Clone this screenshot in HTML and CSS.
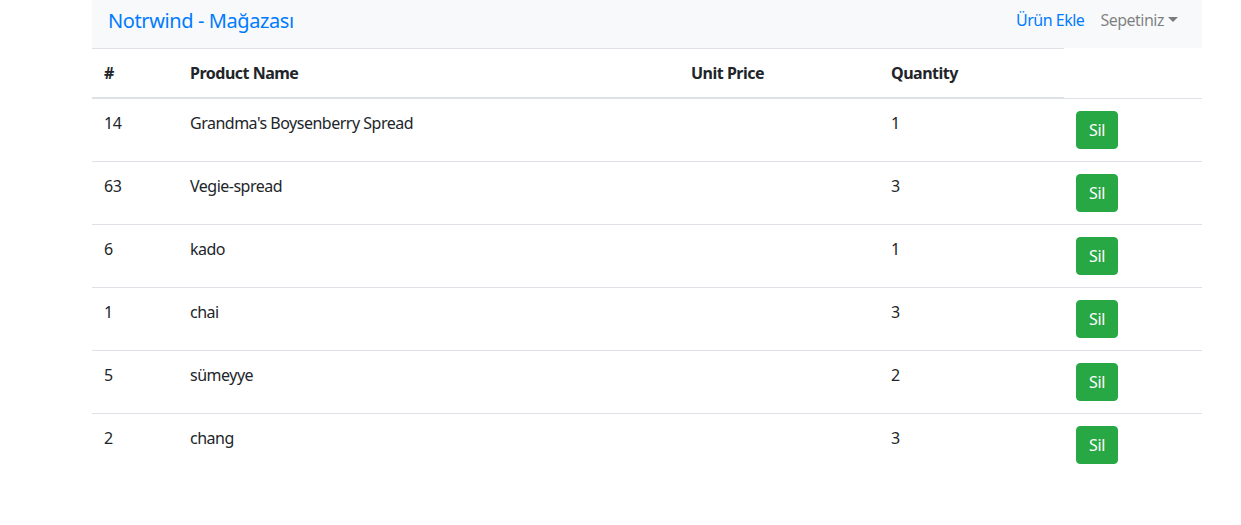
FILE: index.html
```html
<!DOCTYPE html>
<html lang="tr">
<head>
<meta charset="utf-8">
<title>Notrwind - Mağazası</title>
<link rel="stylesheet" href="styles.css">
</head>
<body>
<div class="page">
  <nav class="navbar">
    <a class="brand" href="#">Notrwind - Mağazası</a>
    <ul class="nav">
      <li><a class="nav-link active" href="#">Ürün Ekle</a></li>
      <li><a class="nav-link dropdown" href="#">Sepetiniz<span class="caret"></span></a></li>
    </ul>
  </nav>
  <table class="table">
    <colgroup>
      <col class="c-id"><col class="c-name"><col class="c-price"><col class="c-qty"><col class="c-act">
    </colgroup>
    <thead>
      <tr><th>#</th><th>Product Name</th><th>Unit Price</th><th>Quantity</th></tr>
    </thead>
    <tbody>
      <tr><td>14</td><td>Grandma's Boysenberry Spread</td><td></td><td>1</td><td><button class="btn">Sil</button></td></tr>
      <tr><td>63</td><td>Vegie-spread</td><td></td><td>3</td><td><button class="btn">Sil</button></td></tr>
      <tr><td>6</td><td>kado</td><td></td><td>1</td><td><button class="btn">Sil</button></td></tr>
      <tr><td>1</td><td>chai</td><td></td><td>3</td><td><button class="btn">Sil</button></td></tr>
      <tr><td>5</td><td>sümeyye</td><td></td><td>2</td><td><button class="btn">Sil</button></td></tr>
      <tr><td>2</td><td>chang</td><td></td><td>3</td><td><button class="btn">Sil</button></td></tr>
    </tbody>
  </table>
</div>
</body>
</html>
```

FILE: styles.css
```css
* { box-sizing: border-box; }
html, body { margin: 0; padding: 0; background: #fff; }
body {
  font-family: "Segoe UI", "Noto Sans", "Open Sans", sans-serif;
  font-size: 16px;
  line-height: 24px;
  letter-spacing: -0.5px;
  color: #212529;
}
.page {
  width: 1110px;
  margin-left: 92px;
}
.navbar {
  height: 48px;
  background: #f8f9fa;
  display: flex;
  align-items: center;
  justify-content: space-between;
  padding: 0 16px;
}
.brand {
  font-size: 20px;
  line-height: 30px;
  letter-spacing: -0.4px;
  color: #007bff;
  text-decoration: none;
  margin-top: -6px;
}
.nav {
  list-style: none;
  margin: 0;
  padding: 0;
  display: flex;
  margin-top: -8px;
}
.nav-link {
  display: block;
  padding: 0 8px;
  font-size: 16px;
  line-height: 24px;
  color: rgba(0,0,0,.5);
  text-decoration: none;
}
.nav-link.active { color: #007bff; }
.caret {
  display: inline-block;
  margin-left: 4px;
  vertical-align: 4px;
  border-top: 5px solid;
  border-left: 5px solid transparent;
  border-right: 5px solid transparent;
}
.table {
  width: 1110px;
  border-collapse: collapse;
  table-layout: fixed;
}
.c-id { width: 86px; }
.c-name { width: 501px; }
.c-price { width: 200px; }
.c-qty { width: 185px; }
.c-act { width: 138px; }
.table th, .table td {
  padding: 12px;
  text-align: left;
  vertical-align: top;
  border-top: 1px solid #dee2e6;
}
.table thead th {
  font-weight: 700;
  vertical-align: bottom;
  border-bottom: 2px solid #dee2e6;
}
.btn {
  font-family: inherit;
  font-size: 16px;
  line-height: 24px;
  letter-spacing: -0.3px;
  padding: 6px 12px;
  color: #fff;
  background: #28a745;
  border: 1px solid #28a745;
  border-radius: 4px;
  cursor: pointer;
}
```
